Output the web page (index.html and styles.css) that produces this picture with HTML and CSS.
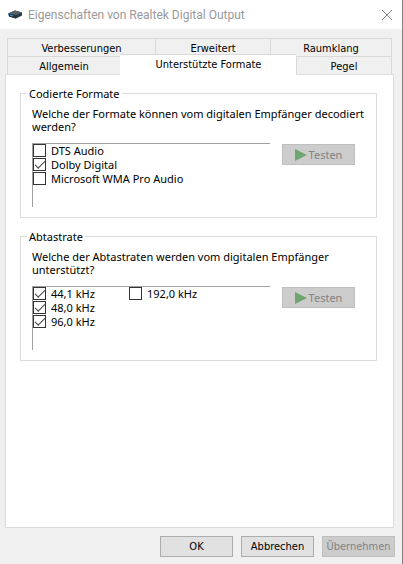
FILE: index.html
```
<!DOCTYPE html>
<html lang="de">
<head>
<meta charset="utf-8">
<meta name="viewport" content="width=device-width, initial-scale=1">
<title>Eigenschaften von Realtek Digital Output</title>
<link rel="stylesheet" href="styles.css">
</head>
<body>
<div class="dialog">
  <header class="titlebar">
    <svg class="device" viewBox="0 0 14 9" aria-hidden="true">
      <path d="M0 3.5 7 .5l7 2v3L8 8.5 1 6.5z" fill="#2c3840"/>
      <path d="M0 3.5 7 .5l7 2L8 5z" fill="#53616a"/>
      <path d="M1 4.5 8 6.5v2L1 6.500z" fill="#23303b"/>
      <path d="M2 5l3 1" stroke="#2f9ad8" stroke-width="1.200"/>
    </svg>
    <h1 class="title">Eigenschaften von Realtek Digital Output</h1>
    <button class="close" type="button" aria-label="Schließen">
      <svg viewBox="0 0 10 10" aria-hidden="true"><path d="M0 0l10 10M10 0L0 10" stroke="#8c8c8c" fill="none"/></svg>
    </button>
  </header>

  <main class="content">
    <div class="tabs" role="tablist">
      <div class="tab-row tab-row-back">
        <button class="tab" type="button" role="tab">Verbesserungen</button>
        <button class="tab" type="button" role="tab">Erweitert</button>
        <button class="tab" type="button" role="tab">Raumklang</button>
      </div>
      <div class="tab-row tab-row-front">
        <button class="tab" type="button" role="tab">Allgemein</button>
        <button class="tab selected" type="button" role="tab" aria-selected="true">Unterstützte Formate</button>
        <button class="tab" type="button" role="tab">Pegel</button>
      </div>
    </div>

    <section class="panel" role="tabpanel">
      <fieldset class="group">
        <legend>Codierte Formate</legend>
        <p class="question">Welche der Formate können vom digitalen Empfänger decodiert werden?</p>
        <div class="choice">
          <div class="list">
            <label class="option"><input type="checkbox">DTS Audio</label>
            <label class="option"><input type="checkbox" checked>Dolby Digital</label>
            <label class="option"><input type="checkbox">Microsoft WMA Pro Audio</label>
          </div>
          <button class="button test" type="button" disabled>
            <svg viewBox="0 0 12 12" aria-hidden="true"><path d="M0 0l12 6L0 12z" fill="#6fa56f"/></svg>Testen
          </button>
        </div>
      </fieldset>

      <fieldset class="group">
        <legend>Abtastrate</legend>
        <p class="question">Welche der Abtastraten werden vom digitalen Empfänger unterstützt?</p>
        <div class="choice">
          <div class="list">
            <label class="option"><input type="checkbox" checked>44,1 kHz</label>
            <label class="option"><input type="checkbox" checked>48,0 kHz</label>
            <label class="option"><input type="checkbox" checked>96,0 kHz</label>
            <label class="option next-column"><input type="checkbox">192,0 kHz</label>
          </div>
          <button class="button test" type="button" disabled>
            <svg viewBox="0 0 12 12" aria-hidden="true"><path d="M0 0l12 6L0 12z" fill="#6fa56f"/></svg>Testen
          </button>
        </div>
      </fieldset>
    </section>
  </main>

  <footer class="actions">
    <button class="button" type="button">OK</button>
    <button class="button" type="button">Abbrechen</button>
    <button class="button" type="button" disabled>Übernehmen</button>
  </footer>
</div>
</body>
</html>
```

FILE: styles.css
```
* {
  box-sizing: border-box;
}

body {
  margin: 0;
  font: 11px/13px "Noto Sans", "Open Sans", sans-serif;
  color: #000;
}

button {
  font: inherit;
  color: inherit;
}

.dialog {
  display: flex;
  flex-direction: column;
  min-height: 100vh;
  background: #f0f0f0;
  border-right: 1px solid #808080;
}

.titlebar {
  display: flex;
  align-items: center;
  height: 29px;
  padding: 0 10px 0 8px;
  background: #fff;
}

.device {
  width: 14px;
  height: 9px;
}

.title {
  flex: 1;
  margin: 0 0 0 6px;
  font-family: Roboto, "Noto Sans", sans-serif;
  font-size: 12px;
  line-height: 16px;
  font-weight: 400;
  color: #999;
}

.close {
  display: flex;
  padding: 0;
  border: 0;
  background: none;
}

.close svg {
  width: 10px;
  height: 10px;
}

.content {
  flex: 1;
  display: flex;
  flex-direction: column;
  padding: 9px 8px 0 5px;
}

.tabs {
  padding: 0 2px;
}

.tab-row {
  display: grid;
  height: 18px;
  border-right: 1px solid #d9d9d9;
}

.tab-row-back {
  grid-template-columns: 148fr 115fr 121fr;
}

.tab-row-front {
  grid-template-columns: 113fr 176fr 95fr;
}

.tab {
  padding: 2px 0 0;
  border: solid #d9d9d9;
  border-width: 1px 0 0 1px;
  background: #f0f0f0;
}

.tab,
.actions .button {
  font-family: "DejaVu Sans Condensed", "Noto Sans", sans-serif;
  font-size: 11px;
}

.tab.selected {
  z-index: 1;
  margin: -2px 0 -1px;
  padding: 0 0 1px;
  border-left-color: #fff;
  background: #fff;
}

.panel {
  flex: 1;
  display: flex;
  flex-direction: column;
  gap: 12px;
  padding: 12px 16px 12px 14px;
  border: 1px solid #dcdcdc;
  background: #fff;
}

.group {
  min-width: 0;
  margin: 0;
  padding: 7px 11px 10px 11px;
  border: 1px solid #dcdcdc;
}

.group legend {
  margin-left: -5px;
  padding: 0 2px;
}

.question {
  margin: 0 0 10px;
}

.choice {
  display: flex;
  align-items: flex-start;
  gap: 12px;
}

.list {
  flex: 0 1 238px;
  display: grid;
  grid-template-rows: repeat(3, 14px);
  grid-auto-flow: column;
  grid-template-columns: 96px 1fr;
  height: 64px;
  border: solid #a0a0a0;
  border-width: 1px 0 0 1px;
}

.option {
  display: flex;
  align-items: flex-start;
  gap: 5px;
  white-space: nowrap;
}

.group .option:not(.next-column) {
  grid-column: 1;
}

.next-column {
  grid-column: 2;
  grid-row: 1;
}

.option input {
  appearance: none;
  flex: none;
  width: 13px;
  height: 13px;
  margin: 0;
  border: 1px solid #333;
  background: #fff;
}

.option input:checked {
  display: grid;
  place-items: center;
}

.option input:checked::before {
  content: "";
  width: 9px;
  height: 4px;
  margin-top: -2px;
  border: solid #444;
  border-width: 0 0 1px 1px;
  transform: rotate(-45deg);
}

.button {
  display: flex;
  align-items: center;
  justify-content: center;
  width: 73px;
  height: 21px;
  padding: 0;
  border: 1px solid #adadad;
  background: #e1e1e1;
}

.button:disabled {
  border-color: #bfbfbf;
  background: #ccc;
  color: #838383;
}

.test {
  gap: 2px;
  margin-top: 1px;
}

.test svg {
  width: 12px;
  height: 12px;
}

.actions {
  display: flex;
  justify-content: flex-end;
  gap: 8px;
  padding: 8px 7px 7px;
}
```
